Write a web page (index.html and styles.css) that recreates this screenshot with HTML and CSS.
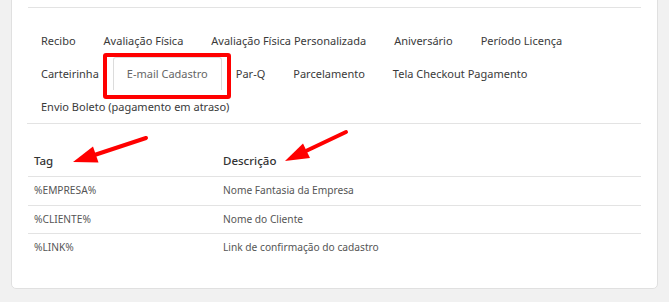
FILE: index.html
```html
<!DOCTYPE html>
<html lang="pt-BR">

<head>
    <meta charset="UTF-8">
    <meta name="viewport" content="width=device-width, initial-scale=1.0">
    <title>Modelos de E-mail</title>

    <link rel="stylesheet" href="styles.css">
</head>

<body>
    <div class="card">
        <div class="card-head"></div>

        <ul class="tabs">
            <li class="tab">Recibo</li>
            <li class="tab">Avaliação Física</li>
            <li class="tab">Avaliação Física Personalizada</li>
            <li class="tab">Aniversário</li>
            <li class="tab">Período Licença</li>
            <li class="tab">Carteirinha</li>
            <li class="tab active">E-mail Cadastro</li>
            <li class="tab">Par-Q</li>
            <li class="tab">Parcelamento</li>
            <li class="tab">Tela Checkout Pagamento</li>
            <li class="tab">Envio Boleto (pagamento em atraso)</li>
        </ul>

        <table class="tags">
            <thead>
                <tr>
                    <th class="col-tag">Tag</th>
                    <th>Descrição</th>
                </tr>
            </thead>
            <tbody>
                <tr>
                    <td>%EMPRESA%</td>
                    <td>Nome Fantasia da Empresa</td>
                </tr>
                <tr>
                    <td>%CLIENTE%</td>
                    <td>Nome do Cliente</td>
                </tr>
                <tr>
                    <td>%LINK%</td>
                    <td>Link de confirmação do cadastro</td>
                </tr>
            </tbody>
        </table>

        <!-- setas de destaque -->
        <svg class="arrows" width="669" height="302" viewBox="0 0 669 302">
            <line x1="146" y1="138" x2="96" y2="154.5" stroke="#ff0000" stroke-width="4" stroke-linecap="round" />
            <polygon points="73,162 98.5,162.5 93,146.5" fill="#ff0000" />
            <line x1="346" y1="132" x2="307" y2="150.5" stroke="#ff0000" stroke-width="4" stroke-linecap="round" />
            <polygon points="285,161 310,158 303,143.5" fill="#ff0000" />
        </svg>
    </div>
</body>

</html>
```

FILE: styles.css
```css
:root {
    --line-color: #e3e3e3;
    --text-color: #3a3a3a;
    --muted-color: #555;
    --background-color: #f1f1f1;
}

* {
    margin: 0;
    padding: 0;
    box-sizing: border-box;
}

body {
    background-color: var(--background-color);
    font-family: "Noto Sans", "Open Sans", sans-serif;
    color: var(--text-color);
}

.card {
    position: relative;
    width: 647px;
    margin: -20px 0 0 11px;
    padding: 0 16px 26px;
    background-color: #fff;
    border: 1px solid #e0e0e0;
    border-radius: 5px;
}

.card-head {
    height: 27px;
    border-bottom: 1px solid var(--line-color);
}

.tabs {
    display: flex;
    flex-wrap: wrap;
    list-style: none;
    margin: 16px 0 0 -1px;
    border-bottom: 1px solid var(--line-color);
}

.tab {
    position: relative;
    padding: 7px 13px;
    border: 1px solid transparent;
    border-bottom: 0;
    font-size: 11px;
    line-height: 18px;
    white-space: nowrap;
}

.tab.active {
    border-color: #dcdcdc;
    border-radius: 3px 3px 0 0;
    color: #666;
}

.tab.active::after {
    content: "";
    position: absolute;
    left: -11px;
    right: -10px;
    top: -5px;
    bottom: -9px;
    border: 4px solid #ff0000;
    border-radius: 3px;
}

.tags {
    width: 100%;
    margin-top: 20px;
    border-collapse: collapse;
    text-align: left;
}

.tags th {
    padding: 8px 6px 7px;
    font-size: 11.5px;
    font-weight: 500;
    line-height: 17px;
    color: #333;
    border-bottom: 1px solid var(--line-color);
}

.tags .col-tag {
    width: 189px;
}

.tags td {
    padding: 6px;
    font-size: 10.2px;
    line-height: 15.5px;
    color: var(--muted-color);
    border-bottom: 1px solid var(--line-color);
}

.tags tbody tr:last-child td {
    border-bottom: 0;
}

.arrows {
    position: absolute;
    left: -12px;
    top: 19px;
    pointer-events: none;
}
```
